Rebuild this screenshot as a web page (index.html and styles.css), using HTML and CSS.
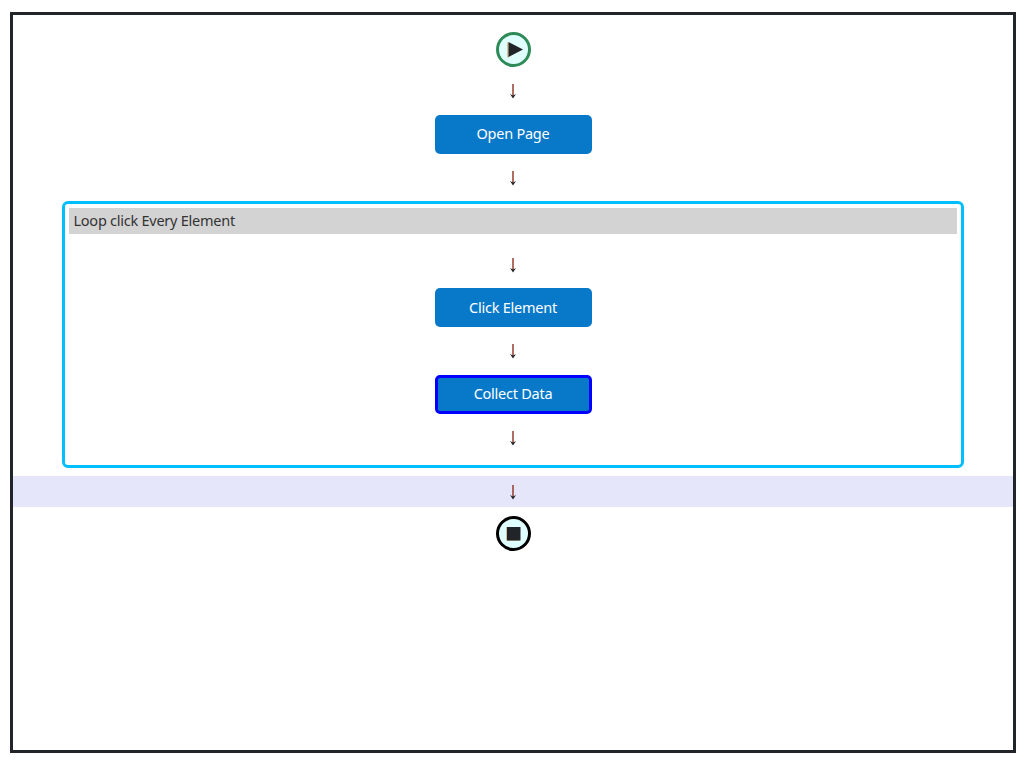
FILE: index.html
```html
<!DOCTYPE html>
<html lang="en">
<head>
<meta charset="utf-8">
<title>Flow</title>
<link rel="stylesheet" href="styles.css">
</head>
<body>
<main class="canvas">
  <div class="terminal terminal-start">
    <svg class="terminal-icon" viewBox="0 0 35 35"><path class="glyph-edge" d="M12 10.500v15"/><path class="glyph" d="M12.500 10 27 17.500 12.500 25Z"/></svg>
  </div>
  <div class="link"><svg class="arrow" viewBox="0 0 9 16"><path class="arrow-stem" d="M4 1v13"/><path class="arrow-head" d="M1 11l3 4.500 3-4.500-3 1.500Z"/></svg></div>
  <div class="node">Open Page</div>
  <div class="link"><svg class="arrow" viewBox="0 0 9 16"><path class="arrow-stem" d="M4 1v13"/><path class="arrow-head" d="M1 11l3 4.500 3-4.500-3 1.500Z"/></svg></div>
  <section class="loop">
    <h2 class="loop-title">Loop click Every Element</h2>
    <div class="link"><svg class="arrow" viewBox="0 0 9 16"><path class="arrow-stem" d="M4 1v13"/><path class="arrow-head" d="M1 11l3 4.500 3-4.500-3 1.500Z"/></svg></div>
    <div class="node">Click Element</div>
    <div class="link"><svg class="arrow" viewBox="0 0 9 16"><path class="arrow-stem" d="M4 1v13"/><path class="arrow-head" d="M1 11l3 4.500 3-4.500-3 1.500Z"/></svg></div>
    <div class="node node-selected">Collect Data</div>
    <div class="link"><svg class="arrow" viewBox="0 0 9 16"><path class="arrow-stem" d="M4 1v13"/><path class="arrow-head" d="M1 11l3 4.500 3-4.500-3 1.500Z"/></svg></div>
  </section>
  <div class="band"><svg class="arrow" viewBox="0 0 9 16"><path class="arrow-stem" d="M4 1v13"/><path class="arrow-head" d="M1 11l3 4.500 3-4.500-3 1.500Z"/></svg></div>
  <div class="terminal terminal-end">
    <svg class="terminal-icon" viewBox="0 0 35 35"><rect class="glyph-edge-fill" x="10.500" y="11" width="13" height="13.500"/><rect class="glyph" x="11" y="11" width="13.500" height="13.500"/></svg>
  </div>
</main>
</body>
</html>
```
FILE: styles.css
```css
* { box-sizing: border-box; }
html, body { margin: 0; background: #fff; }
body {
  padding: 12px 8px 12px 10px;
  font-family: "Noto Sans", "Open Sans", sans-serif;
}
.canvas {
  height: 741px;
  border: 3px solid #212529;
  padding-top: 17px;
  display: flex;
  flex-direction: column;
  align-items: center;
}
.terminal {
  width: 35px;
  height: 35px;
  border-radius: 50%;
  background: #e0ffff;
  flex: none;
  position: relative;
  border: 3px solid;
}
.terminal-start { border-color: #2e8b57; }
.terminal-end { border-color: #000; margin-top: 9px; }
.terminal-icon {
  position: absolute;
  left: -3px;
  top: -3px;
  width: 35px;
  height: 35px;
}
.glyph { fill: #212529; }
.glyph-edge { stroke: #c08a3c; stroke-width: 1; fill: none; }
.glyph-edge-fill { fill: #c08a3c; }
.link {
  height: 47.5px;
  width: 100%;
  flex: none;
  padding-top: 1px;
  display: flex;
  align-items: center;
  justify-content: center;
}
.arrow { width: 9px; height: 16px; display: block; }
.arrow-stem { stroke: #8f2f1e; stroke-width: 1.4; fill: none; }
.arrow-head { fill: #212529; }
.node {
  width: 157px;
  height: 39px;
  flex: none;
  background: #0878c8;
  color: #fff;
  border-radius: 5px;
  font-size: 14.5px;
  letter-spacing: -0.25px;
  padding-bottom: 2px;
  display: flex;
  align-items: center;
  justify-content: center;
}
.node-selected { border: 3px solid #0000ff; }
.loop {
  width: 902px;
  height: 267px;
  flex: none;
  border: 3px solid #00bfff;
  border-radius: 6px;
  padding: 4px;
  display: flex;
  flex-direction: column;
  align-items: center;
}
.loop-title {
  width: 100%;
  height: 26px;
  flex: none;
  margin: 0 0 6.500px;
  padding: 0 4.500px;
  background: #d3d3d3;
  color: #333;
  font-size: 14.5px;
  letter-spacing: -0.25px;
  font-weight: 400;
  line-height: 25px;
}
.band {
  width: 100%;
  height: 31px;
  flex: none;
  margin-top: 8px;
  padding-top: 1px;
  background: #e6e6fa;
  display: flex;
  align-items: center;
  justify-content: center;
}
```
